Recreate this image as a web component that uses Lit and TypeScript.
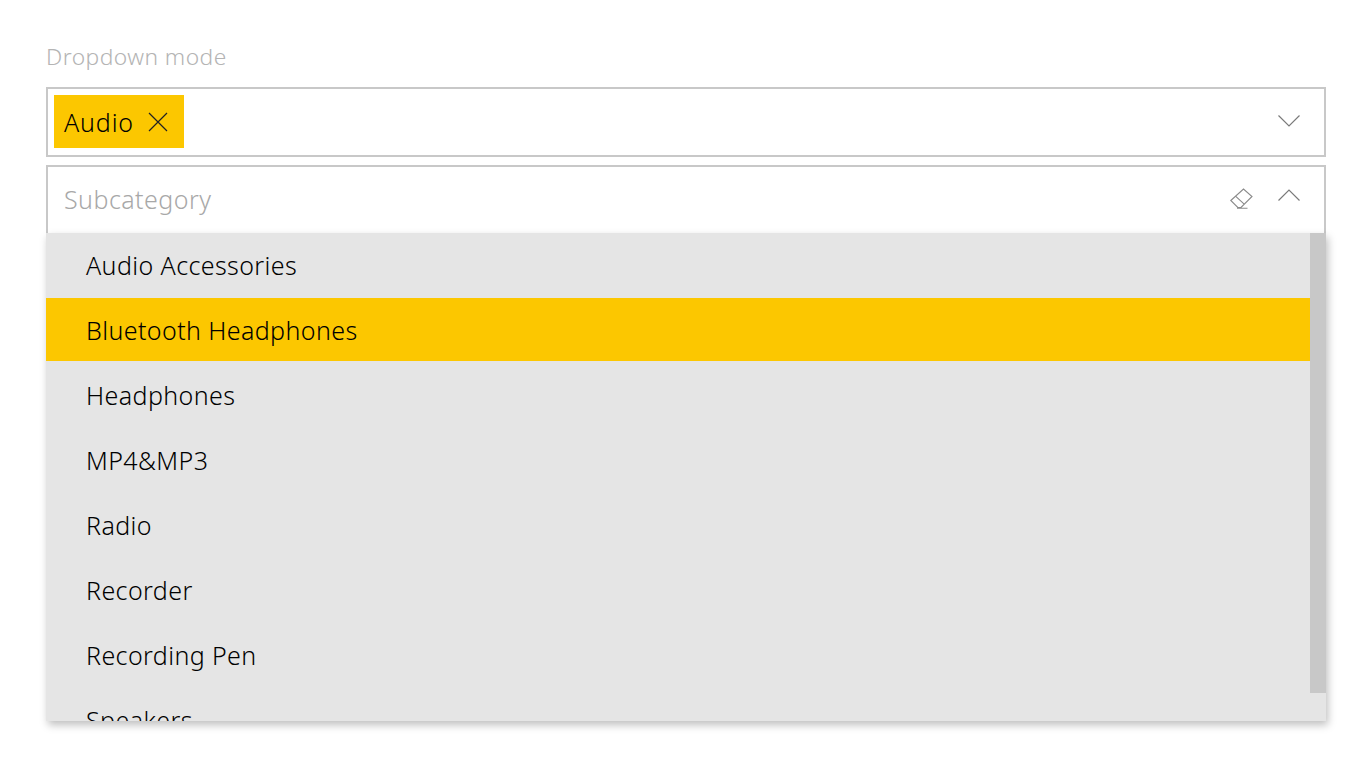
import { LitElement, html, css } from "lit";
import { customElement } from "lit/decorators.js";

const items = ["Audio Accessories", "Bluetooth Headphones", "Headphones", "MP4&MP3", "Radio", "Recorder", "Recording Pen", "Speakers"];

@customElement("app-root")
export class AppRoot extends LitElement {
  static styles = css`
    :host { display: block; height: 768px; background: #fff; overflow: hidden; font-family: "Noto Sans", "Open Sans", sans-serif; font-weight: 300; color: #000; }
    .wrap { display: flex; flex-direction: column; padding: 42px 40px 0 46px; }
    .label { font-size: 22.8px; line-height: 30px; color: #b4b4b4; margin-bottom: 15px; letter-spacing: .45px; }
    .box { box-sizing: border-box; border: 2px solid #c8c8c8; display: flex; align-items: center; height: 70px; padding: 0 24px 0 6px; }
    .box + .box { margin-top: 8px; }
    .chip { background: #fcc700; height: 53px; width: 130px; margin-top: -2px; box-sizing: border-box; padding: 2px 0 0 10px; display: flex; align-items: center; gap: 14px; font-size: 25px; letter-spacing: .85px; }
    .spacer { flex: 1; }
    .ph { font-size: 25px; color: #a8a8a8; padding-left: 10px; letter-spacing: .45px; }
    .sub { position: relative; height: 120px; align-items: flex-start; padding-top: 14px; border-bottom: none; }
    .sub .ph { line-height: 36px; }
    .chev { display: block; }
    .chev-down { margin-top: -2px; }
    .chev-up { margin-top: 8px; }
    .erase { display: block; margin-right: 25px; margin-top: 7px; }
    .panel { position: absolute; left: -2px; right: -2px; top: 66px; height: 488px; background: #e5e5e5; box-shadow: 2px 4px 8px rgba(0,0,0,.25); display: flex; overflow: hidden; }
    .list { flex: 1; min-width: 0; }
    .item { height: 63px; margin-bottom: 2px; padding: 1px 0 0 40px; box-sizing: border-box; font-size: 25px; line-height: 62px; letter-spacing: .4px; white-space: nowrap; }
    .item.sel { background: #fcc700; }
    .thumb { width: 16px; height: 460px; background: #c8c8c8; }
  `;

  render() {
    return html`
      <div class="wrap">
        <div class="label">Dropdown mode</div>
        <div class="box">
          <div class="chip"><span>Audio</span>
            <svg width="20" height="20" viewBox="0 0 20 20" fill="none" stroke="#222" stroke-width="1.2"><path d="M1 1 19 19M19 1 1 19"/></svg>
          </div>
          <div class="spacer"></div>
          <svg class="chev chev-down" width="22" height="12" viewBox="0 0 22 12" fill="none" stroke="#7a7a7a" stroke-width="1.2"><path d="M.5.5 11 11 21.500.5"/></svg>
        </div>
        <div class="box sub">
          <div class="ph">Subcategory</div>
          <div class="spacer"></div>
          <svg class="erase" width="23" height="21" viewBox="0 0 23 21" fill="none" stroke="#8a8a8a" stroke-width="1.1"><path d="M.8 12.500 13.500 1l8.500 7.500L11 19.500H7.800zM5.500 8.200l8.700 8M7 20.300h10.500"/></svg>
          <svg class="chev chev-up" width="22" height="12" viewBox="0 0 22 12" fill="none" stroke="#7a7a7a" stroke-width="1.2"><path d="M.5 11.500 11 1l10.500 10.500"/></svg>
          <div class="panel">
            <div class="list">${items.map((t, i) => html`<div class="item ${i === 1 ? "sel" : ""}">${t}</div>`)}</div>
            <div class="thumb"></div>
          </div>
        </div>
      </div>
    `;
  }
}
